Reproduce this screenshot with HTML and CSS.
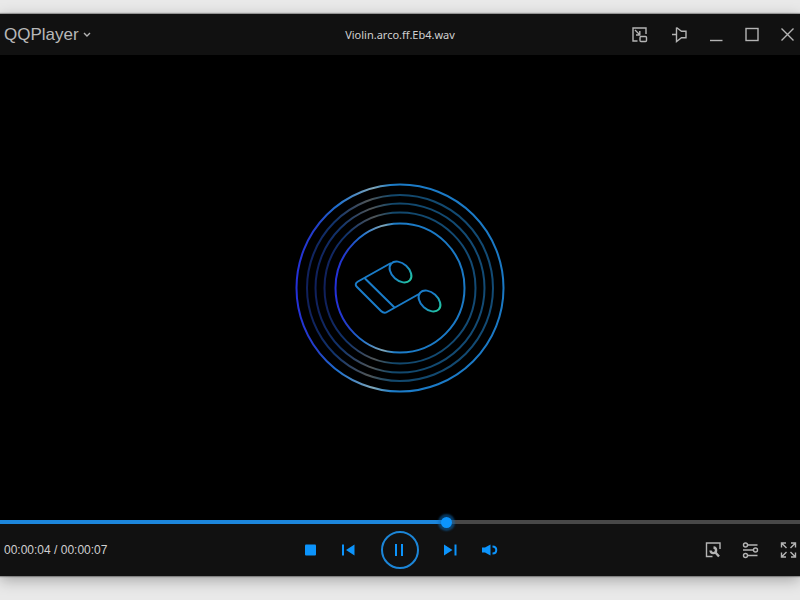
FILE: index.html
```
<!DOCTYPE html>
<html lang="en">
<head>
    <meta charset="UTF-8">
    <meta name="viewport" content="width=device-width, initial-scale=1.0">
    <title>QQPlayer</title>
    <link rel="stylesheet" href="styles.css">
</head>
<body>
    <div class="player">
        <header class="title-bar">
            <button class="app-menu" type="button">
                QQPlayer
                <svg width="8" height="6" viewBox="0 0 8 6"><path d="M1 1l3 3 3-3"/></svg>
            </button>
            <h1 class="file-name">Violin.arco.ff.Eb4.wav</h1>
            <div class="window-buttons">
                <button class="icon-button mini-mode" type="button" aria-label="Mini mode">
                    <svg width="24" height="24" viewBox="0 0 24 24"><path d="M9.500 18H5V5H18V11M7 7l4.500 4.500M11.800 8v4H8"/><rect x="12" y="13.500" width="6.500" height="5" rx="1"/></svg>
                </button>
                <button class="icon-button" type="button" aria-label="Always on top">
                    <svg width="24" height="24" viewBox="0 0 24 24"><path d="M4 11.500H8.500M8.500 4.500V18.500L13.500 14.800H18V8.200H13.500L8.500 4.500"/></svg>
                </button>
                <button class="icon-button" type="button" aria-label="Minimize">
                    <svg width="24" height="24" viewBox="0 0 24 24"><path d="M6 17.500H18.500"/></svg>
                </button>
                <button class="icon-button" type="button" aria-label="Maximize">
                    <svg width="24" height="24" viewBox="0 0 24 24"><rect x="6" y="5.500" width="12" height="12"/></svg>
                </button>
                <button class="icon-button" type="button" aria-label="Close">
                    <svg width="24" height="24" viewBox="0 0 24 24"><path d="M5.500 5.500l12 12M17.500 5.500l-12 12"/></svg>
                </button>
            </div>
        </header>

        <main class="stage">
            <svg class="disc" width="210" height="210" viewBox="0 0 210 210">
                <defs>
                    <linearGradient id="rim">
                        <stop offset="0" stop-color="#2430d8"/>
                        <stop offset="0.1" stop-color="#2340c8"/>
                        <stop offset="0.2" stop-color="#1f70cc"/>
                        <stop offset="0.37" stop-color="#7fa6b8"/>
                        <stop offset="0.46" stop-color="#1c7cc8"/>
                        <stop offset="1" stop-color="#1a78c4"/>
                    </linearGradient>
                    <linearGradient id="groove">
                        <stop offset="0" stop-color="#10205c"/>
                        <stop offset="0.15" stop-color="#12346c"/>
                        <stop offset="0.33" stop-color="#505658"/>
                        <stop offset="0.46" stop-color="#12486c"/>
                        <stop offset="1" stop-color="#124a74"/>
                    </linearGradient>
                    <linearGradient id="note-head">
                        <stop offset="0.45" stop-color="#1a7cc8"/>
                        <stop offset="1" stop-color="#22c4a4"/>
                    </linearGradient>
                </defs>
                <circle class="rim" cx="105" cy="105" r="103.500"/>
                <circle class="groove" cx="105" cy="105" r="93"/>
                <circle class="groove" cx="105" cy="105" r="84.500"/>
                <circle class="groove" cx="105" cy="105" r="75.500"/>
                <circle class="rim" cx="105" cy="105" r="64.500"/>
                <path class="note" d="M96 80L63 98.500Q59 101 62 104L86 128Q89 131 92 129L124 111M70 95.500L99.500 124.500"/>
                <ellipse class="note-head" cx="105.500" cy="89" rx="12.500" ry="8.500" transform="rotate(42 105.500 89)"/>
                <ellipse class="note-head" cx="134.500" cy="118" rx="12.500" ry="8.500" transform="rotate(42 134.500 118)"/>
            </svg>
        </main>

        <input class="seek" type="range" min="0" max="1000" value="559" aria-label="Seek" style="--played: 56%">

        <footer class="control-bar">
            <p class="time">00:00:04 / 00:00:07</p>
            <div class="transport">
                <button class="icon-button" type="button" aria-label="Stop">
                    <svg width="24" height="24" viewBox="0 0 24 24"><rect class="solid" x="6" y="6.500" width="11" height="11" rx="1"/></svg>
                </button>
                <button class="icon-button" type="button" aria-label="Previous">
                    <svg width="24" height="24" viewBox="0 0 24 24"><path class="solid" d="M5 6.500h2v11H5zM9 12L17.500 6.500V17.500z"/></svg>
                </button>
                <button class="icon-button pause" type="button" aria-label="Pause">
                    <svg width="24" height="24" viewBox="0 0 24 24"><path class="solid" d="M7 6h2v12H7zM13 6h2v12h-2z"/></svg>
                </button>
                <button class="icon-button" type="button" aria-label="Next">
                    <svg width="24" height="24" viewBox="0 0 24 24"><path class="solid" d="M5 6.500L13.500 12L5 17.500zM15.500 6.500h2v11h-2z"/></svg>
                </button>
                <button class="icon-button" type="button" aria-label="Volume">
                    <svg width="24" height="24" viewBox="0 0 24 24"><path class="solid" d="M5 9.500H8L13.500 6.500V17.500L8 14.500H5z"/><path class="wave" d="M15.500 8.500C20.500 8.500 20.500 15.500 15.500 15.500"/></svg>
                </button>
            </div>
            <div class="tools">
                <button class="icon-button" type="button" aria-label="Tools">
                    <svg width="24" height="24" viewBox="0 0 24 24"><path d="M12.500 18.500H6.500V5H20V11"/><path class="wrench" d="M13.500 9.500A2.800 2.800 0 1 1 10.500 12.500M15 14L19 18.500"/></svg>
                </button>
                <button class="icon-button" type="button" aria-label="Settings">
                    <svg width="24" height="24" viewBox="0 0 24 24"><circle cx="7.500" cy="7" r="2"/><circle cx="17.500" cy="12" r="2"/><circle cx="7.500" cy="17.500" r="2"/><path d="M9.500 7H19.500M5 12H15.500M9.500 17.500H19.500"/></svg>
                </button>
                <button class="icon-button" type="button" aria-label="Full screen">
                    <svg width="24" height="24" viewBox="0 0 24 24"><path d="M5.500 9.500V5H10M5.500 5L10.500 10M15 5H19.500V9.500M19.500 5L14.500 10M5.500 14.500V19H10M5.500 19L10.500 14M15 19H19.500V14.500M19.500 19L14.500 14"/></svg>
                </button>
            </div>
        </footer>
    </div>
</body>
</html>
```
FILE: styles.css
```
* {
    margin: 0;
    padding: 0;
    box-sizing: border-box;
}

body {
    display: flex;
    min-height: 100vh;
    padding: 14px 0 24px;
    background: #e9e9e9;
    font-family: 'Noto Sans', sans-serif;
    font-size: 11px;
    color: #d0d0d0;
}

.player {
    flex: 1;
    display: flex;
    flex-direction: column;
    background: #000;
    box-shadow: 0 0 1px 1px rgba(0,0,0,0.3), 0 4px 14px rgba(0,0,0,0.3);
}

button {
    background: none;
    border: none;
    color: inherit;
    cursor: pointer;
}

svg {
    display: block;
    fill: none;
    stroke: #b4b4b4;
    stroke-width: 1.4;
}

.title-bar,
.control-bar {
    display: grid;
    grid-template-columns: 1fr auto 1fr;
    align-items: center;
    background: #111;
}

.title-bar {
    height: 41px;
}

.app-menu {
    display: flex;
    align-items: center;
    justify-self: start;
    gap: 4px;
    padding-left: 4px;
    font-family: 'Liberation Sans', Arial, sans-serif;
    font-size: 17px;
    color: #b8b8b8;
}

.file-name {
    font-size: 11px;
    font-weight: normal;
}

.window-buttons {
    display: flex;
    justify-content: flex-end;
    gap: 12px;
}

.icon-button {
    display: flex;
    align-items: center;
    justify-content: center;
    width: 24px;
    height: 24px;
}

.mini-mode {
    margin-right: 4px;
}

.stage {
    flex: 1;
    display: flex;
    align-items: center;
    justify-content: center;
}

.rim {
    stroke: url(#rim);
    stroke-width: 2;
}

.groove {
    stroke: url(#groove);
    stroke-width: 2;
}

.note {
    stroke: #1a7cc8;
    stroke-width: 2;
}

.note-head {
    stroke: url(#note-head);
    stroke-width: 2;
}

/* the thumb is taller than the track and lies over the control bar */
.seek {
    -webkit-appearance: none;
    appearance: none;
    position: relative;
    z-index: 1;
    display: block;
    width: 100%;
    height: 4px;
    background: linear-gradient(90deg, #1c86dc var(--played), #484848 var(--played));
    cursor: pointer;
}

.seek::-webkit-slider-thumb {
    -webkit-appearance: none;
    width: 11px;
    height: 11px;
    border-radius: 50%;
    background: #0c94fc;
    box-shadow: 0 0 2px 3px rgba(12,110,190,0.5);
}

.control-bar {
    height: 52px;
}

.time {
    padding-left: 4px;
    font-family: 'Liberation Sans', Arial, sans-serif;
    font-size: 12px;
}

.transport {
    display: flex;
    align-items: center;
    gap: 14px;
}

.transport .solid {
    fill: #0c94fc;
    stroke: none;
}

.transport .wave {
    stroke: #0c94fc;
    stroke-width: 2;
}

.pause {
    width: 38px;
    height: 38px;
    margin: 0 6px;
    border: 2px solid #1c86d8;
    border-radius: 50%;
}

.tools {
    display: flex;
    justify-content: flex-end;
    gap: 14px;
}

.wrench {
    stroke-width: 2.4;
}
```
